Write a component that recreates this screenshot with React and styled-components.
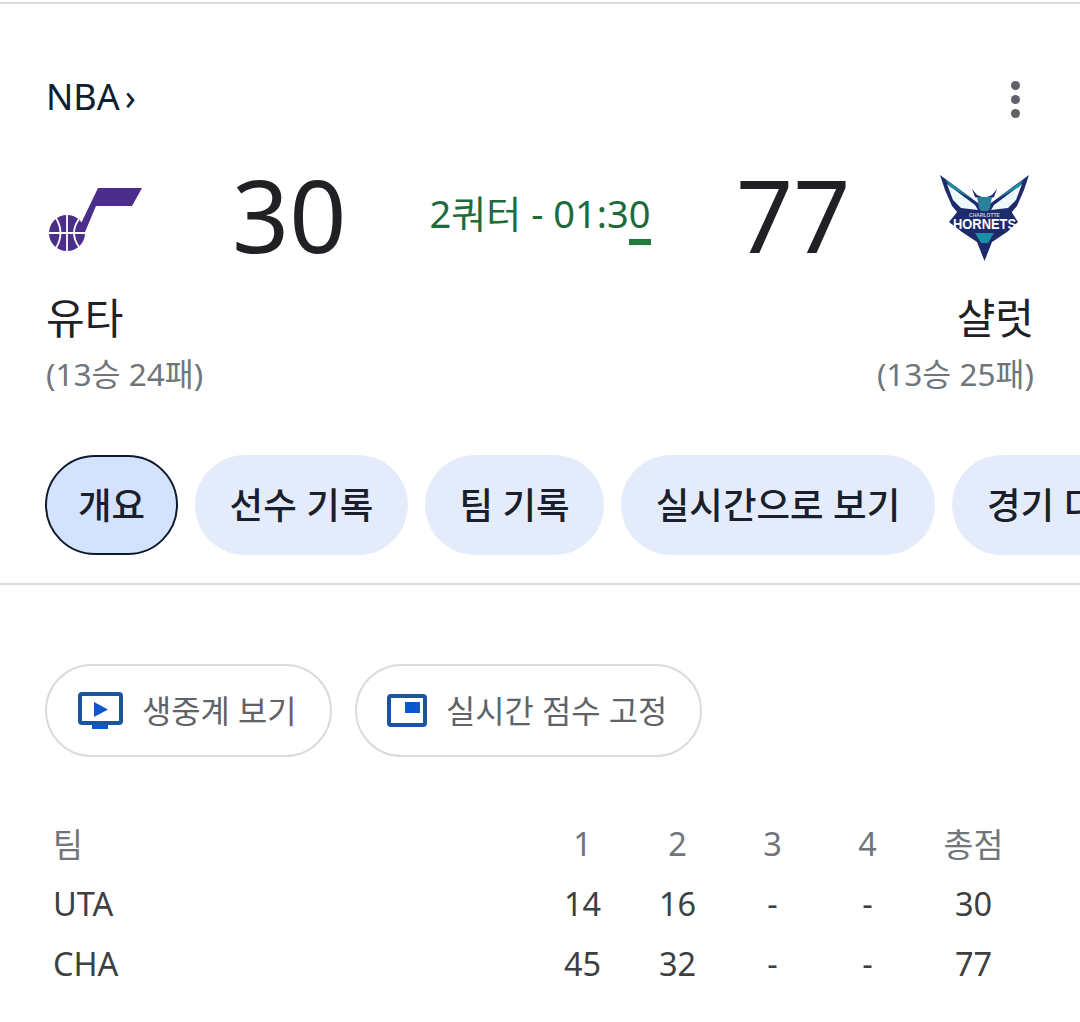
import { Fragment } from 'react'
import styled, { createGlobalStyle } from 'styled-components'

const GlobalStyle = createGlobalStyle`
  html, body {
    margin: 0;
    padding: 0;
    background: #fff;
  }
  body {
    font-family: "Noto Sans", "Noto Sans CJK KR", sans-serif;
    overflow: hidden;
  }
`

const Page = styled.div`
  width: 1080px;
  height: 1018px;
  overflow: hidden;
  border-top: 2px solid #dcdcdc;
  margin-top: 2px;
  box-sizing: border-box;
`

const Header = styled.div`
  height: 286px;
  padding: 0 46px;
  box-sizing: border-box;
`

const LeagueRow = styled.div`
  height: 128px;
  display: flex;
  align-items: center;
  justify-content: space-between;
  padding-top: 56px;
  box-sizing: border-box;
`

const League = styled.div`
  font-size: 36px;
  color: #0d2030;
  display: flex;
  align-items: center;
  gap: 5px;
`

const MoreButton = styled.div`
  display: flex;
  flex-direction: column;
  gap: 5px;
  margin: 7px 14px 0 0;
`

const Dot = styled.span`
  width: 9px;
  height: 9px;
  border-radius: 50%;
  background: #5f6368;
`

const ScoreRow = styled.div`
  display: grid;
  grid-template-columns: 186px 112px 1fr 112px 186px;
  align-items: center;
  height: 120px;
  margin-top: 22px;
`

const Logo = styled.svg`
  display: block;
  margin-top: ${(p) => p.$nudge}px;
  margin-right: ${(p) => (p.$right ? '2px' : '0')};
  justify-self: ${(p) => (p.$right ? 'end' : 'start')};
`

const Score = styled.div`
  font-size: 100px;
  line-height: 120px;
  padding-right: 4px;
  color: #202124;
  text-align: center;
`

const Status = styled.div`
  position: relative;
  justify-self: center;
  font-size: 38px;
  margin-bottom: 6px;
  color: #1e6b3a;
  white-space: nowrap;
`

const LiveBar = styled.span`
  position: absolute;
  right: -1px;
  bottom: -6px;
  width: 22px;
  height: 6px;
  background: #1e7e3e;
`

const TeamRow = styled.div`
  display: flex;
  justify-content: space-between;
  padding: 0 46px;
`

const Team = styled.div`
  text-align: ${(p) => (p.$right ? 'right' : 'left')};
`

const TeamName = styled.div`
  font-size: 42px;
  line-height: 56px;
  color: #202124;
`

const Record = styled.div`
  font-size: 31.5px;
  line-height: 56px;
  color: #70757a;
`

const Tabs = styled.div`
  display: flex;
  gap: 17px;
  padding-left: 45px;
  margin-top: 53px;
  overflow: hidden;
`

const Tab = styled.div`
  flex: none;
  height: 100px;
  width: ${(p) => p.$width}px;
  box-sizing: border-box;
  border-radius: 50px;
  display: flex;
  align-items: center;
  justify-content: ${(p) => (p.$cut ? 'flex-start' : 'center')};
  padding-left: ${(p) => (p.$cut ? '35px' : '0')};
  padding-bottom: 4px;
  font-size: 36.5px;
  font-weight: 500;
  color: #1a1f2b;
  white-space: nowrap;
  background: ${(p) => (p.$active ? '#d3e3fd' : '#e4ecfc')};
  border: ${(p) => (p.$active ? '2px solid #0f1b2d' : 'none')};
`

const Divider = styled.div`
  height: 2px;
  background: #dadce0;
  margin-top: 28px;
`

const Actions = styled.div`
  display: flex;
  gap: 23px;
  padding-left: 45px;
  margin-top: 79px;
`

const ActionButton = styled.div`
  height: 93px;
  width: ${(p) => p.$width}px;
  box-sizing: border-box;
  border: 2px solid #dadce0;
  border-radius: 47px;
  display: flex;
  align-items: center;
  padding-left: ${(p) => p.$pad}px;
  gap: 19px;
  font-size: 31.8px;
  color: #5f6368;
  white-space: nowrap;
`

const ActionLabel = styled.span`
  padding-bottom: 4px;
`

const Table = styled.div`
  display: grid;
  grid-template-columns: 1fr repeat(4, 95px) 117px;
  grid-auto-rows: 60px;
  align-items: center;
  margin: 56px 48px 0 53px;
  font-size: 32.5px;
  color: #3c4043;
`

const Cell = styled.div`
  text-align: ${(p) => (p.$left ? 'left' : 'center')};
  color: ${(p) => (p.$head ? '#70757a' : '#3c4043')};
`

function JazzLogo() {
  return (
    <Logo $nudge={10} width="96" height="70" viewBox="46 184 96 70">
      <path d="M98 188 L142 188 L132 206 L96 206 L85 232 L75 236 Z" fill="#4b2d8c" />
      <circle cx="67" cy="233" r="18" fill="#4b2d8c" />
      <g fill="none" stroke="#fff" strokeWidth="1.8">
        <path d="M67 215 V251" />
        <path d="M49 233 H85" />
        <path d="M56 218 Q65 233 56 248" />
        <path d="M79 219 Q69 233 79 247" />
      </g>
    </Logo>
  )
}

const hornetsWing = (
  <>
    <path d="M940 175 L978 203 L985 212 L958 213 L952 206 L945 190 Z" fill="#1d2a6b" />
    <path d="M947 184 L975 205 L978 210 L961 208 L953 200 Z" fill="#eef9fb" />
    <path d="M945 179 L972 199 L950 187 Z" fill="#1b8fa6" />
    <path d="M972 189 L977 195 L982 197 L982 199 L975 197 Z" fill="#1d2a6b" />
  </>
)

function HornetsLogo() {
  return (
    <Logo $right $nudge={8} width="94" height="92" viewBox="938 172 94 92">
      {hornetsWing}
      <g transform="matrix(-1 0 0 1 1969 0)">{hornetsWing}</g>
      {/* head */}
      <path d="M977 197 H992 L990 208 L987 213 H982 L979 208 Z" fill="#2a7f9b" />
      {/* shield */}
      <path d="M958 211 H1011 L1018 222 L1007 232 L992 242 L984.5 261 L977 242 L962 232 L949 222 Z" fill="#1d2a6b" />
      <path d="M975 233 H994 L988 243 H981 Z" fill="#1b8fa6" />
      <text x="984.5" y="216.5" textAnchor="middle" fontSize="5" fontWeight="700" fontFamily="Liberation Sans, sans-serif" fill="#c9ccd8">CHARLOTTE</text>
      <text x="984.5" y="229" textAnchor="middle" fontSize="14" fontWeight="700" fontFamily="Liberation Sans, sans-serif" fill="#fff" textLength="63" lengthAdjust="spacingAndGlyphs">HORNETS</text>
    </Logo>
  )
}

function WatchIcon() {
  return (
    <svg width="45" height="37" viewBox="0 0 45 37">
      <rect x="2" y="2" width="41" height="29" rx="2" fill="none" stroke="#1c54a0" strokeWidth="4" />
      <path d="M16 10 L30 17.5 L16 25 Z" fill="#0b57d0" />
      <rect x="14" y="33" width="16" height="4" fill="#0b57d0" />
    </svg>
  )
}

function PipIcon() {
  return (
    <svg width="40" height="33" viewBox="0 0 40 33">
      <rect x="2" y="2" width="36" height="29" rx="2" fill="none" stroke="#1c54a0" strokeWidth="4" />
      <rect x="18" y="8" width="15" height="11" fill="#0b57d0" />
    </svg>
  )
}

const rows = [
  { team: 'UTA', q: ['14', '16', '-', '-'], total: '30' },
  { team: 'CHA', q: ['45', '32', '-', '-'], total: '77' },
]

const App = () => {
  return (
    <Page>
      <GlobalStyle />
      <Header>
        <LeagueRow>
          <League>NBA <span>›</span></League>
          <MoreButton>
            <Dot />
            <Dot />
            <Dot />
          </MoreButton>
        </LeagueRow>
        <ScoreRow>
          <JazzLogo />
          <Score>30</Score>
          <Status>
            2쿼터 - 01:30
            <LiveBar />
          </Status>
          <Score>77</Score>
          <HornetsLogo />
        </ScoreRow>
      </Header>
      <TeamRow>
        <Team>
          <TeamName>유타</TeamName>
          <Record>(13승 24패)</Record>
        </Team>
        <Team $right>
          <TeamName>샬럿</TeamName>
          <Record>(13승 25패)</Record>
        </Team>
      </TeamRow>
      <Tabs>
        <Tab $active $width={133}>개요</Tab>
        <Tab $width={213}>선수 기록</Tab>
        <Tab $width={179}>팀 기록</Tab>
        <Tab $width={314}>실시간으로 보기</Tab>
        <Tab $cut $width={300}>경기 더보기</Tab>
      </Tabs>
      <Divider />
      <Actions>
        <ActionButton $width={287} $pad={31}>
          <WatchIcon />
          <ActionLabel>생중계 보기</ActionLabel>
        </ActionButton>
        <ActionButton $width={347} $pad={30}>
          <PipIcon />
          <ActionLabel>실시간 점수 고정</ActionLabel>
        </ActionButton>
      </Actions>
      <Table>
        <Cell $left $head>팀</Cell>
        <Cell $head>1</Cell>
        <Cell $head>2</Cell>
        <Cell $head>3</Cell>
        <Cell $head>4</Cell>
        <Cell $head>총점</Cell>
        {rows.map((row) => (
          <Fragment key={row.team}>
            <Cell $left>{row.team}</Cell>
            {row.q.map((v, i) => <Cell key={i}>{v}</Cell>)}
            <Cell>{row.total}</Cell>
          </Fragment>
        ))}
      </Table>
    </Page>
  )
}

export default App
